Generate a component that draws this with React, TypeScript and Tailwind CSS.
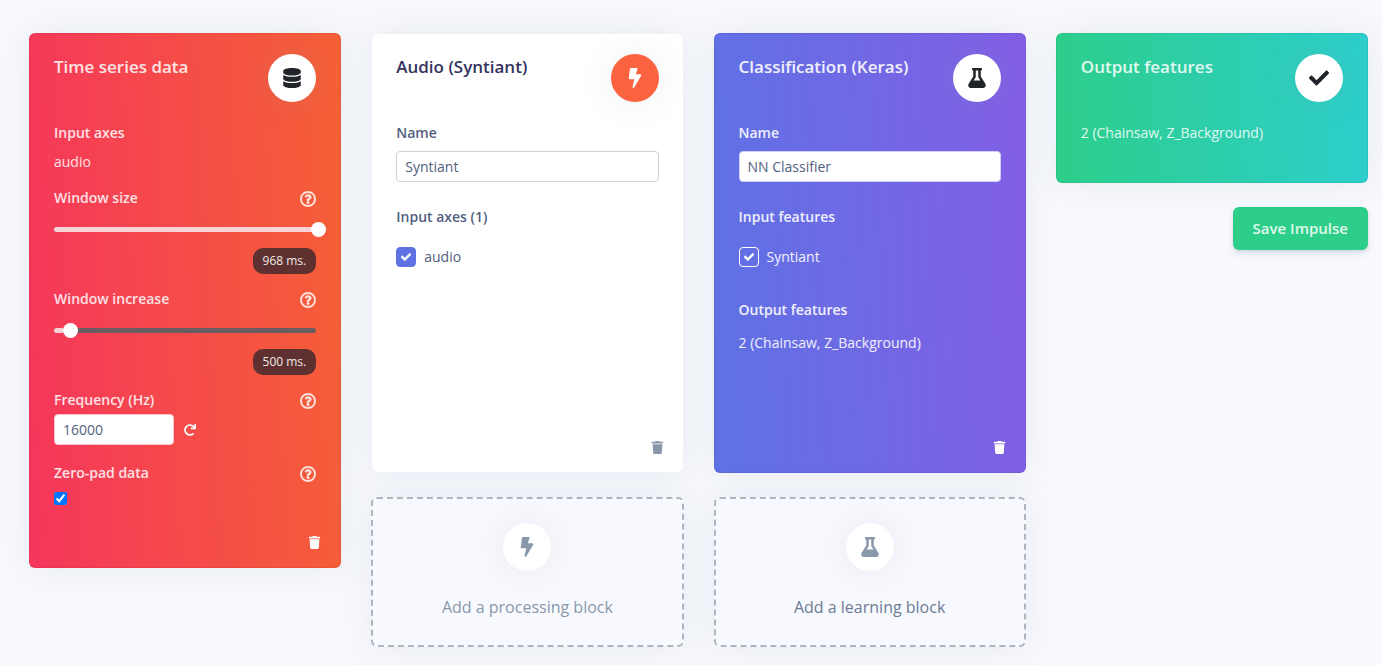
import { useId, useState } from "react";
import type { ReactNode } from "react";
import {
  FaBolt,
  FaCheck,
  FaDatabase,
  FaFlask,
  FaRedo,
  FaRegQuestionCircle,
  FaTrash,
} from "react-icons/fa";

const softShadow = "shadow-[0_0_32px_rgba(136,152,170,0.15)]";

function Card({ tone, title, icon, iconTone, children }: {
  tone: string;
  title: string;
  icon: ReactNode;
  iconTone: string;
  children: ReactNode;
}) {
  return (
    <section
      className={`flex flex-col rounded-md border bg-origin-border px-6 pt-5 ${softShadow} ${tone}`}
    >
      <header className="mb-[21px] flex items-start justify-between">
        <h2 className="text-[17px] leading-[26px] font-semibold">{title}</h2>
        <span
          className={`flex size-12 shrink-0 items-center justify-center rounded-full text-xl ${softShadow} ${iconTone}`}
        >
          {icon}
        </span>
      </header>
      {children}
    </section>
  );
}

function Help({ topic }: { topic: string }) {
  return (
    <button type="button" aria-label={`Help: ${topic}`} className="pt-[3px] text-base">
      <FaRegQuestionCircle stroke="currentColor" strokeWidth={12} />
    </button>
  );
}

function Slider({ label, min, max, initial }: {
  label: string;
  min: number;
  max: number;
  initial: number;
}) {
  const id = useId();
  const [value, setValue] = useState(initial);
  const percent = ((value - min) / (max - min)) * 100;
  return (
    <div className="mb-[15px]">
      <div className="flex h-5 items-start justify-between">
        <label htmlFor={id} className="leading-5 font-semibold">{label}</label>
        <Help topic={label} />
      </div>
      <div className="relative mt-[19px] h-[5px] rounded-full bg-[#6a5c60]">
        <div className="h-[5px] rounded-full bg-[#f9d3d6]" style={{ width: `${Math.max(percent, 4)}%` }} />
        <input
          id={id}
          type="range"
          min={min}
          max={max}
          value={value}
          onChange={(e) => setValue(Number(e.target.value))}
          className="absolute -top-[5px] left-0 h-[15px] w-[calc(100%+10px)] cursor-pointer appearance-none bg-transparent [&::-webkit-slider-thumb]:size-[15px] [&::-webkit-slider-thumb]:appearance-none [&::-webkit-slider-thumb]:rounded-full [&::-webkit-slider-thumb]:bg-white"
        />
      </div>
      <div className="mt-4 flex justify-end">
        <output htmlFor={id} className="rounded-[10px] bg-[#5e302f] px-[10px] text-xs leading-[26px] text-white/90">
          {value} ms.
        </output>
      </div>
    </div>
  );
}

function Tick({ label, boxTone }: { label: string; boxTone: string }) {
  const [on, setOn] = useState(true);
  return (
    <label className="flex items-center gap-2 leading-5">
      <span className="relative flex size-5">
        <input
          type="checkbox"
          checked={on}
          onChange={(e) => setOn(e.target.checked)}
          className={`size-5 appearance-none rounded border ${boxTone}`}
        />
        {on && (
          <FaCheck
            stroke="currentColor"
            strokeWidth={30}
            className="pointer-events-none absolute inset-0 m-auto text-[10px] text-white"
          />
        )}
      </span>
      {label}
    </label>
  );
}

function NameField({ initial, borderTone }: { initial: string; borderTone: string }) {
  const id = useId();
  return (
    <>
      <label htmlFor={id} className="leading-5 font-semibold">Name</label>
      <input
        id={id}
        type="text"
        defaultValue={initial}
        className={`mt-2 mb-[25px] h-[31px] w-full rounded border bg-white px-2 text-[#525f7f] outline-none ${borderTone}`}
      />
    </>
  );
}

function Trash({ label, tone }: { label: string; tone: string }) {
  return (
    <button type="button" aria-label={label} className={`mt-auto mb-[18px] -mr-[5px] self-end text-[13px] ${tone}`}>
      <FaTrash />
    </button>
  );
}

function AddBlock({ icon, children, tone }: { icon: ReactNode; children: ReactNode; tone: string }) {
  return (
    <button
      type="button"
      className={`flex h-[150px] w-full flex-col items-center rounded-md border-2 border-dashed border-[#adb5bd] bg-[#f8f9fe] pt-6 text-base ${softShadow} ${tone}`}
    >
      <span className={`flex size-12 items-center justify-center rounded-full bg-white text-xl text-[#8898aa] ${softShadow}`}>
        {icon}
      </span>
      <span className="mt-6 leading-6">{children}</span>
    </button>
  );
}

export default function App() {
  const frequencyId = useId();
  const padId = useId();
  return (
    <main className="grid min-h-screen grid-cols-4 items-start gap-[30px] bg-[#f8f9fe] pt-[33px] pr-[14px] pb-4 pl-[29px] font-['Open_Sans',sans-serif] text-sm">
      <Card
        tone="min-h-[535px] border-black/5 bg-[linear-gradient(87deg,#f5365c_0%,#f56036_100%)] text-white/85"
        title="Time series data"
        icon={<FaDatabase />}
        iconTone="bg-white text-[#212529]"
      >
        <h3 className="leading-5 font-semibold">Input axes</h3>
        <p className="mt-[9px] mb-4 leading-5">audio</p>
        <Slider label="Window size" min={484} max={968} initial={968} />
        <Slider label="Window increase" min={484} max={968} initial={500} />
        <div className="flex h-5 items-start justify-between">
          <label htmlFor={frequencyId} className="leading-5 font-semibold">Frequency (Hz)</label>
          <Help topic="Frequency" />
        </div>
        <div className="mt-1 mb-[18px] flex items-center gap-[10px]">
          <input
            id={frequencyId}
            type="text"
            defaultValue="16000"
            className="h-[31px] w-[120px] rounded border border-[#fbc5cd] bg-white px-2 text-[#525f7f] outline-none"
          />
          <button type="button" aria-label="Reset frequency" className="text-xs text-white">
            <FaRedo />
          </button>
        </div>
        <div className="flex h-5 items-start justify-between">
          <label htmlFor={padId} className="leading-5 font-semibold">Zero-pad data</label>
          <Help topic="Zero-pad data" />
        </div>
        <input id={padId} type="checkbox" defaultChecked className="mt-[9px] size-[13px]" />
        <Trash label="Delete input block" tone="text-white" />
      </Card>

      <div className="flex flex-col gap-6">
        <Card
          tone="min-h-[440px] border-[#f1f2f7] bg-white bg-clip-padding text-[#525f7f] [&_h2]:text-[#32325d]"
          title="Audio (Syntiant)"
          icon={<FaBolt />}
          iconTone="bg-[#fb6340] text-white"
        >
          <NameField initial="Syntiant" borderTone="border-[#cad1d7]" />
          <h3 className="mb-5 leading-5 font-semibold">Input axes (1)</h3>
          <Tick label="audio" boxTone="border-[#5e72e4] bg-[#5e72e4]" />
          <Trash label="Delete processing block" tone="text-[#8898aa]" />
        </Card>
        <AddBlock icon={<FaBolt />} tone="text-[#8898aa]">Add a processing block</AddBlock>
      </div>

      <div className="flex flex-col gap-6">
        <Card
          tone="min-h-[440px] border-black/5 bg-[linear-gradient(87deg,#5e72e4_0%,#825ee4_100%)] text-white/90"
          title="Classification (Keras)"
          icon={<FaFlask />}
          iconTone="bg-white text-[#212529]"
        >
          <NameField initial="NN Classifier" borderTone="border-[#cfd0f5]" />
          <h3 className="mb-5 leading-5 font-semibold">Input features</h3>
          <Tick label="Syntiant" boxTone="border-white bg-transparent" />
          <h3 className="mt-[33px] leading-5 font-semibold">Output features</h3>
          <p className="mt-[13px] leading-5">2 (Chainsaw, Z_Background)</p>
          <Trash label="Delete learning block" tone="text-white" />
        </Card>
        <AddBlock icon={<FaFlask />} tone="text-[#6b7c93]">Add a learning block</AddBlock>
      </div>

      <div className="flex flex-col gap-6">
        <Card
          tone="min-h-[150px] border-black/5 bg-[linear-gradient(87deg,#2dce89_0%,#2dcecc_100%)] text-white/85"
          title="Output features"
          icon={<FaCheck />}
          iconTone="bg-white text-[#212529]"
        >
          <p className="leading-5">2 (Chainsaw, Z_Background)</p>
        </Card>
        <button
          type="button"
          className="self-end rounded-md bg-[#2dce89] px-5 py-[11px] text-[15px] leading-[21px] font-semibold text-white/85 shadow-[0_4px_6px_rgba(50,50,93,0.11),0_1px_3px_rgba(0,0,0,0.08)]"
        >
          Save Impulse
        </button>
      </div>
    </main>
  );
}
